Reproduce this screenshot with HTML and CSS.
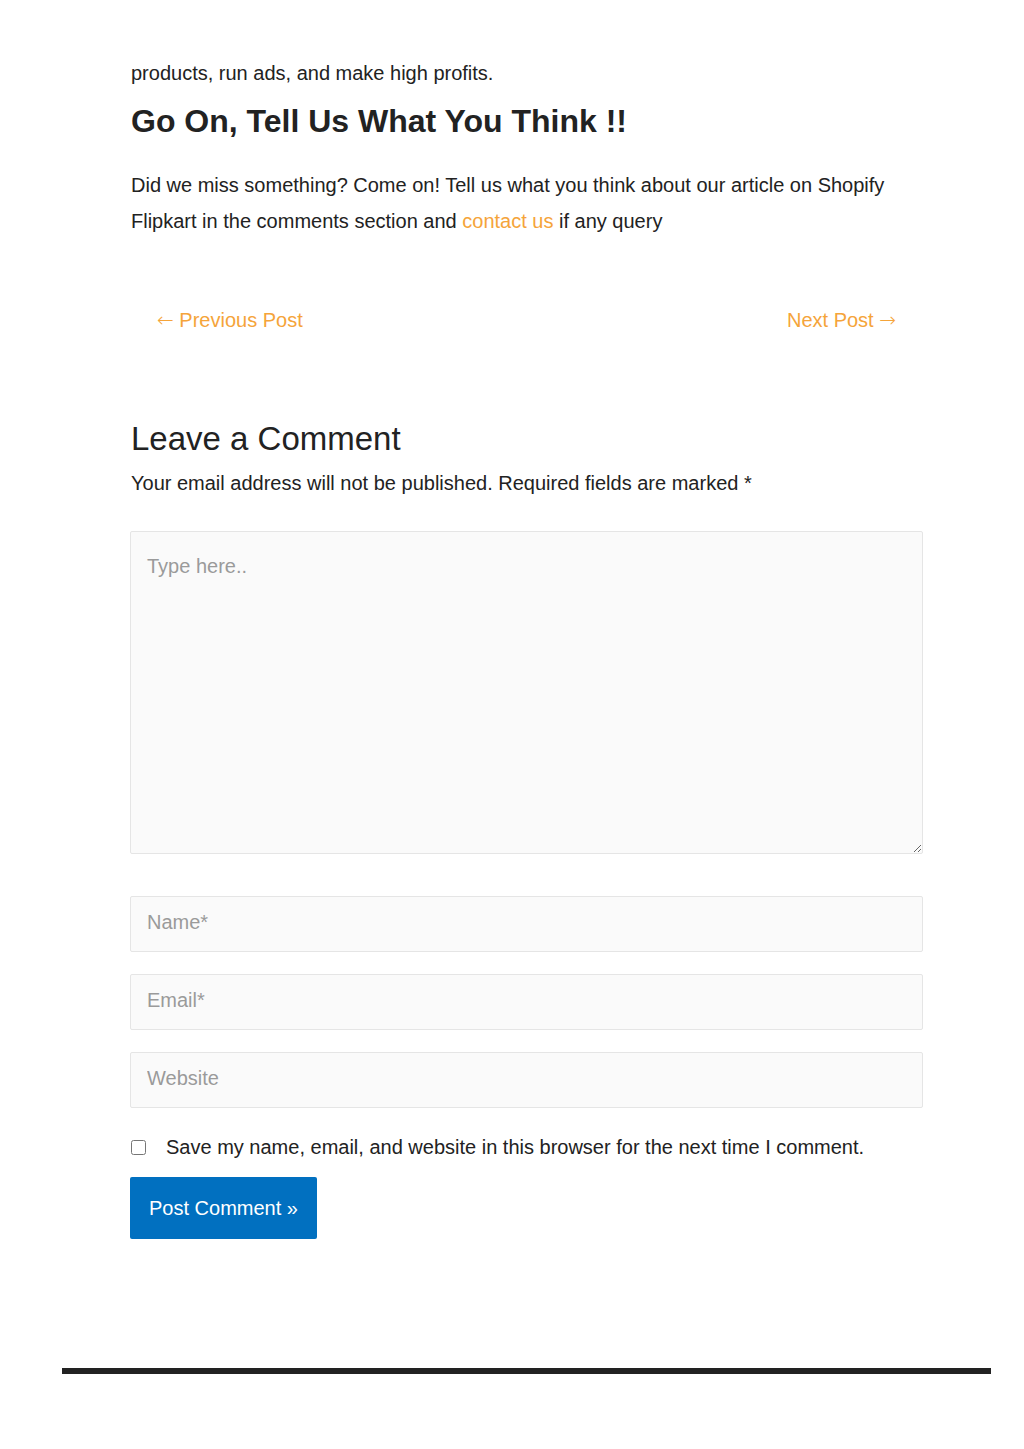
FILE: index.html
```html
<!DOCTYPE html>
<html lang="en">
<head>
    <meta charset="UTF-8">
    <meta name="viewport" content="width=device-width, initial-scale=1.0">
    <title>Go On, Tell Us What You Think</title>
    <link rel="stylesheet" href="styles.css">
</head>
<body>
    <div class="page">
        <article class="entry">
            <p class="tail">products, run ads, and make high profits.</p>
            <h2 class="entry-heading">Go On, Tell Us What You Think !!</h2>
            <p class="entry-text">Did we miss something? Come on! Tell us what you think about our article on Shopify Flipkart in the comments section and <a href="#">contact us</a> if any query</p>
        </article>

        <nav class="post-nav">
            <a href="#" class="prev"><span class="arrow">&larr;</span> Previous Post</a>
            <a href="#" class="next">Next Post <span class="arrow">&rarr;</span></a>
        </nav>

        <section class="respond">
            <h3 class="respond-title">Leave a Comment</h3>
            <p class="notes">Your email address will not be published. Required fields are marked *</p>
            <form class="comment-form">
                <textarea class="comment-box" placeholder="Type here.."></textarea>
                <div class="fields">
                    <input type="text" class="field" placeholder="Name*">
                    <input type="email" class="field" placeholder="Email*">
                    <input type="url" class="field" placeholder="Website">
                </div>
                <label class="cookies">
                    <input type="checkbox">
                    <span>Save my name, email, and website in this browser for the next time I comment.</span>
                </label>
                <div>
                    <button type="button" class="submit">Post Comment &raquo;</button>
                </div>
            </form>
        </section>
    </div>
    <div class="footer-line"></div>
</body>
</html>
```

FILE: styles.css
```css
body, html {
    margin: 0;
    padding: 0;
    font-family: "Liberation Sans", Arial, sans-serif;
    color: #222;
    background: #fff;
}
.page {
    width: 792px;
    margin: 0 0 0 131px;
    padding-top: 58px;
}
a {
    color: #f5a43a;
    text-decoration: none;
}
.tail {
    margin: 0;
    font-size: 20px;
    line-height: 30px;
}
.entry-heading {
    font-size: 32px;
    font-weight: bold;
    margin: 13px 0 0;
    line-height: 40px;
}
.entry-text {
    font-size: 20px;
    line-height: 36px;
    margin: 26px 0 0;
}
.post-nav {
    display: flex;
    justify-content: space-between;
    padding: 0 27px 0 26px;
    margin-top: 66px;
    font-size: 20px;
    line-height: 30px;
}
.arrow {
    font-family: "DejaVu Sans", sans-serif;
    font-weight: 300;
}
.respond {
    margin-top: 84px;
}
.respond-title {
    font-size: 33px;
    font-weight: normal;
    margin: 0;
    line-height: 40px;
}
.notes {
    font-size: 20px;
    margin: 9px 0 0;
    line-height: 30px;
}
.comment-form {
    margin: 33px 0 0 -1px;
    display: flex;
    flex-direction: column;
}
.comment-box,
.field {
    box-sizing: border-box;
    width: 100%;
    background: #fafafa;
    border: 1px solid #e5e5e5;
    border-radius: 2px;
    font-family: "Liberation Sans", Arial, sans-serif;
    font-size: 20px;
    color: #333;
    padding: 0 16px;
    outline: none;
}
.comment-box {
    height: 323px;
    padding-top: 23px;
    resize: vertical;
}
.comment-box::placeholder,
.field::placeholder {
    color: #9a9a9a;
}
.fields {
    display: flex;
    flex-direction: column;
    gap: 22px;
    margin-top: 42px;
}
.field {
    height: 56px;
    padding-bottom: 3px;
}
.cookies {
    display: flex;
    align-items: center;
    margin-top: 26px;
    font-size: 20px;
    line-height: 26px;
}
.cookies input {
    margin: 0 20px 0 1px;
    width: 15px;
    height: 15px;
}
.submit {
    margin-top: 17px;
    background: #0170c0;
    color: #fff;
    border: none;
    border-radius: 2px;
    font-family: "Liberation Sans", Arial, sans-serif;
    font-size: 20px;
    padding: 0 19px;
    height: 62px;
    cursor: pointer;
}
.footer-line {
    margin: 129px 0 0 62px;
    width: 929px;
    height: 6px;
    background: #222;
}
```
